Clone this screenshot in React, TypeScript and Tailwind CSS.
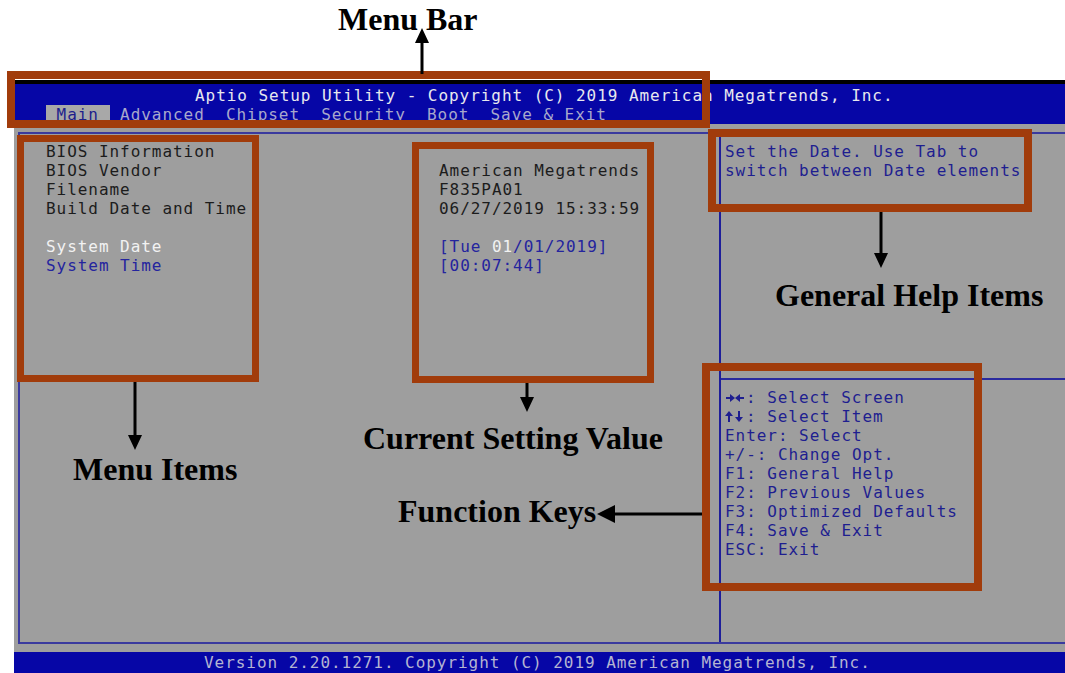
const labels = ['BIOS Information', 'BIOS Vendor', 'Filename', 'Build Date and Time'];
const values = ['', 'American Megatrends', 'F835PA01', '06/27/2019 15:33:59'];

const keys = [
  ['lr', ': Select Screen'],
  ['ud', ': Select Item'],
  ['', 'Enter: Select'],
  ['', '+/-: Change Opt.'],
  ['', 'F1: General Help'],
  ['', 'F2: Previous Values'],
  ['', 'F3: Optimized Defaults'],
  ['', 'F4: Save & Exit'],
  ['', 'ESC: Exit'],
];

const boxes = [
  { id: 'bar', cls: 'left-[7px] top-[71px] w-[703px] h-[57px] border-[8px]' },
  { id: 'items', cls: 'left-[17px] top-[135px] w-[242px] h-[247px] border-[7px]' },
  { id: 'values', cls: 'left-[412px] top-[142px] w-[242px] h-[241px] border-[7px]' },
  { id: 'help', cls: 'left-[708px] top-[129px] w-[324px] h-[83px] border-[8px]' },
  { id: 'keys', cls: 'left-[702px] top-[363px] w-[280px] h-[228px] border-[8px]' },
];

function Line({ children, className = '' }: { children?: React.ReactNode; className?: string }) {
  return <div className={`h-[19px] leading-[19px] whitespace-pre ${className}`}>{children}</div>;
}

// key glyphs drawn as small arrows, two character cells wide
function KeyArrows({ kind }: { kind: string }) {
  return (
    <svg width="21" height="19" viewBox="0 0 21 19" className="inline-block align-top" fill="#1e1e90" stroke="#1e1e90">
      {kind === 'lr' ? (
        <>
          <line x1="1" y1="10" x2="6" y2="10" strokeWidth="2" />
          <polygon points="10,10 5,6 5,14" stroke="none" />
          <line x1="14" y1="10" x2="19" y2="10" strokeWidth="2" />
          <polygon points="10,10 15,6 15,14" stroke="none" />
        </>
      ) : (
        <>
          <line x1="4" y1="9" x2="4" y2="15" strokeWidth="2" />
          <polygon points="4,4 0,9 8,9" stroke="none" />
          <line x1="14" y1="4" x2="14" y2="10" strokeWidth="2" />
          <polygon points="14,15 10,10 18,10" stroke="none" />
        </>
      )}
    </svg>
  );
}

function Arrows() {
  return (
    <svg className="absolute inset-0 pointer-events-none" width="1065" height="673" viewBox="0 0 1065 673">
      <g stroke="#000" strokeWidth="3">
        <line x1="422" y1="74" x2="422" y2="40" />
        <line x1="881" y1="212" x2="881" y2="256" />
        <line x1="135" y1="382" x2="135" y2="437" />
        <line x1="527" y1="383" x2="527" y2="399" />
        <line x1="702" y1="514" x2="612" y2="514" />
      </g>
      <g fill="#000">
        <polygon points="422,28 415,43 429,43" />
        <polygon points="881,268 874,253 888,253" />
        <polygon points="135,450 128,435 142,435" />
        <polygon points="527,412 520,397 534,397" />
        <polygon points="597,514 615,505 615,523" />
      </g>
    </svg>
  );
}

export default function App() {
  return (
    <div className="relative w-[1065px] h-[673px] overflow-hidden bg-white pt-[80px] pl-[14px] font-['DejaVu_Sans_Mono',monospace] text-[16px] tracking-[0.95px]">
      <div className="flex flex-col h-[593px]">
        <div className="h-[4px] bg-black" />
        <div className="h-[40px] bg-[#0606a6] pt-[2px]">
          <Line className="pl-[181px] text-[#e8e8ee]">Aptio Setup Utility - Copyright (C) 2019 American Megatrends, Inc.</Line>
          <Line className="pl-[32px] flex text-[#a8a8cc]">
            <span className="bg-[#a8a8a8] text-[#1e1e8c]"> Main </span>
            <span> Advanced  Chipset  Security  Boot  Save &amp; Exit</span>
          </Line>
        </div>
        <div className="flex-1 bg-[#9e9e9e] pt-[8px] pb-[8px] pl-[4px]">
          <div className="h-full flex border-t-2 border-l-2 border-b-2 border-[#3a3a9e]">
            <div className="w-[699px] pl-[26px] pt-[8px] grid grid-cols-[393px_1fr] content-start text-[#1c1c1c]">
              <div>
                {labels.map((l) => (
                  <Line key={l}>{l}</Line>
                ))}
                <Line />
                <Line className="text-[#f2f2f2]">System Date</Line>
                <Line className="text-[#24249e]">System Time</Line>
              </div>
              <div>
                {values.map((v, i) => (
                  <Line key={i}>{v}</Line>
                ))}
                <Line />
                <Line className="text-[#24249e]">
                  [Tue <span className="text-[#f2f2f2]">01</span>/01/2019]
                </Line>
                <Line className="text-[#24249e]">[00:07:44]</Line>
              </div>
            </div>
            <div className="flex-1 flex flex-col border-l-2 border-[#1e1e9a] text-[#1e1e90]">
              <div className="h-[244px] pl-[4px] pt-[8px]">
                <Line>Set the Date. Use Tab to</Line>
                <Line>switch between Date elements</Line>
              </div>
              <div className="border-t-2 border-[#2a2a9e] pl-[4px] pt-[8px]">
                {keys.map(([a, t]) => (
                  <Line key={t}>
                    {a && <KeyArrows kind={a} />}
                    {t}
                  </Line>
                ))}
              </div>
            </div>
          </div>
        </div>
        <div className="h-[21px] bg-[#0606a6] pl-[190px] leading-[21px] text-[#b4b4d2] whitespace-pre">
          Version 2.20.1271. Copyright (C) 2019 American Megatrends, Inc.
        </div>
      </div>

      {boxes.map((b) => (
        <div key={b.id} className={`absolute border-[#a13c0b] ${b.cls}`} />
      ))}

      <Arrows />

      <div className="absolute inset-0 pointer-events-none font-['Liberation_Serif',serif] font-bold tracking-normal text-black leading-none">
        <div className="absolute left-[338px] top-[3px] text-[32px]">Menu Bar</div>
        <div className="absolute left-[775px] top-[279px] text-[32px]">General Help Items</div>
        <div className="absolute left-[73px] top-[453px] text-[32px]">Menu Items</div>
        <div className="absolute left-[363px] top-[422px] text-[32px]">Current Setting Value</div>
        <div className="absolute left-[398px] top-[495px] text-[32px]">Function Keys</div>
      </div>
    </div>
  );
}
